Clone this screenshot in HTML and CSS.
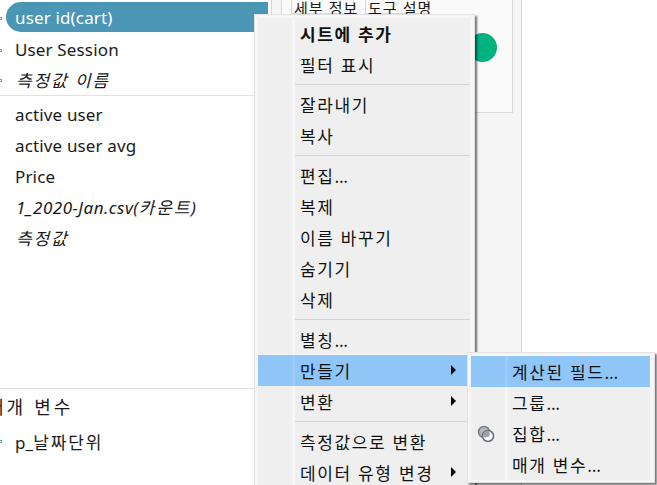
FILE: index.html
```html
<!DOCTYPE html>
<html lang="ko">
<head>
<meta charset="utf-8">
<title>필드 메뉴</title>
<link rel="stylesheet" href="styles.css">
</head>
<body>
<div class="page">
  <aside class="sidebar">
    <div class="group first">
      <div class="row selected"><span class="tick"></span><span class="latin">user id(cart)</span></div>
      <div class="row tight"><span class="tick"></span><span class="latin">User Session</span></div>
      <div class="row"><span class="tick"></span><span class="ko it">측정값 이름</span></div>
    </div>
    <div class="group second">
      <div class="row"><span class="latin">active user</span></div>
      <div class="row"><span class="latin">active user avg</span></div>
      <div class="row tight"><span class="latin">Price</span></div>
      <div class="row"><span class="latin it">1_2020-Jan.csv(<span class="ko">카운트</span>)</span></div>
      <div class="row"><span class="ko it">측정값</span></div>
    </div>
    <div class="group third">
      <div class="params ko">매개 변수</div>
      <div class="row"><span class="tick"></span><span class="latin">p_<span class="ko">날짜단위</span></span></div>
    </div>
  </aside>
  <section class="middle">
    <div class="card">
      <div class="tabs">
        <span class="tab ko">세부 정보</span>
        <span class="tab ko">도구 설명</span>
      </div>
      <div class="dot"></div>
    </div>
  </section>
  <div class="canvas"></div>
</div>

<div class="menu main-menu">
  <div class="list">
    <div class="item bold">시트에 추가</div>
    <div class="item">필터 표시</div>
    <div class="sep"></div>
    <div class="item">잘라내기</div>
    <div class="item">복사</div>
    <div class="sep"></div>
    <div class="item">편집<span class="dots">...</span></div>
    <div class="item">복제</div>
    <div class="item">이름 바꾸기</div>
    <div class="item">숨기기</div>
    <div class="item">삭제</div>
    <div class="sep"></div>
    <div class="item">별칭<span class="dots">...</span></div>
    <div class="item active">만들기<span class="arrow"></span></div>
    <div class="item">변환<span class="arrow"></span></div>
    <div class="sep"></div>
    <div class="item">측정값으로 변환</div>
    <div class="item">데이터 유형 변경<span class="arrow"></span></div>
  </div>
</div>

<div class="menu sub-menu">
  <div class="list">
    <div class="item active">계산된 필드<span class="dots">...</span></div>
    <div class="item">그룹<span class="dots">...</span></div>
    <div class="item">
      <svg class="set-icon" width="18" height="18" viewBox="0 0 18 18" aria-hidden="true">
        <circle cx="7" cy="7" r="5.5" fill="#b4b8be" stroke="#737c87" stroke-width="1.5"/>
        <circle cx="11" cy="11" r="5.5" fill="#fff" stroke="#5f6a76" stroke-width="1.5"/>
        <path d="M5.6 11.2a5.5 5.5 0 0 1 5.6-5.7 5.5 5.5 0 0 1 1.2 5.6 5.5 5.5 0 0 1-6.8.1z" fill="#9ba2aa"/>
      </svg>
      집합<span class="dots">...</span>
    </div>
    <div class="item">매개 변수<span class="dots">...</span></div>
  </div>
</div>
</body>
</html>
```

FILE: styles.css
```css
html, body {
  margin: 0;
  padding: 0;
  width: 657px;
  height: 485px;
  overflow: hidden;
  background: #fff;
}
body {
  position: relative;
  font-family: "Noto Sans", "Noto Sans CJK KR", sans-serif;
  font-size: 17px;
  color: #1a1a1a;
}
.page {
  display: flex;
  height: 485px;
}
.sidebar {
  width: 272px;
  box-sizing: border-box;
  border-right: 1px solid #d4d4d4;
  background: #fff;
  display: flex;
  flex-direction: column;
  flex: none;
}
.group.first {
  padding-top: 2px;
  height: 93px;
  border-bottom: 1px solid #e1e1e1;
}
.group.second {
  padding-top: 3px;
  height: 289px;
  border-bottom: 1px solid #e1e1e1;
}
.row {
  height: 31px;
  display: flex;
  align-items: center;
  padding-left: 15px;
  position: relative;
  white-space: nowrap;
}
.tight {
  height: 30px;
}
.tick {
  position: absolute;
  left: -2px;
  top: 15px;
  width: 4px;
  height: 3px;
  border: 1px solid #6f9fb8;
  box-sizing: border-box;
}
.selected {
  height: 30px;
  margin: 0 3px 2px 6px;
  padding-left: 9px;
  background: #4b96b4;
  color: #fff;
  border-radius: 15px 0 0 15px;
}
.selected .tick {
  left: -8px;
}
.latin {
  letter-spacing: 0.15px;
}
.ko {
  font-family: "Noto Sans CJK KR", sans-serif;
  letter-spacing: 1.8px;
}
.it {
  font-style: italic;
}
.row > .ko.it {
  padding-left: 1px;
}
.latin.it {
  letter-spacing: 0.5px;
  padding-left: 1px;
}
.params {
  margin-left: -13px;
  height: 37px;
  line-height: 34px;
  font-size: 18px;
  letter-spacing: 3px;
  white-space: nowrap;
}
.third .tick {
  top: 14px;
}
.middle {
  width: 250px;
  flex: none;
  box-sizing: border-box;
  background: #f5f5f5;
  border-right: 1px solid #d4d4d4;
  padding-left: 9px;
  padding-right: 8px;
}
.card {
  height: 113px;
  box-sizing: border-box;
  background: #fafafa;
  border: 1px solid #d8d8d8;
  border-top: 0;
  display: flex;
  flex-direction: column;
}
.tabs {
  display: flex;
  gap: 11px;
  padding-left: 9px;
  height: 14px;
}
.tab {
  width: 63px;
  box-sizing: border-box;
  border: 1px solid #d8d8d8;
  border-top: 0;
  height: 14px;
  font-size: 15px;
  line-height: 16px;
  letter-spacing: 1px;
  padding-left: 2px;
  white-space: nowrap;
}
.dot {
  width: 29px;
  height: 29px;
  border-radius: 50%;
  background: #00b280;
  margin: 19px 15px 0 auto;
}
.canvas {
  flex: 1;
  background: #fff;
}
.menu {
  position: absolute;
  box-sizing: border-box;
  background: #f6f6f6;
  border: 1px solid #e2e2e2;
  padding: 3px 4px 3px 3px;
  box-shadow: 2px 2px 2px rgba(0, 0, 0, 0.55);
  font-family: "Noto Sans CJK KR", sans-serif;
  font-size: 17px;
  letter-spacing: 1.6px;
  color: #111;
}
.main-menu {
  left: 254px;
  top: 14px;
  width: 221px;
  height: 490px;
}
.sub-menu {
  left: 467px;
  top: 352px;
  width: 188px;
  height: 131px;
}
.list {
  background: linear-gradient(to right, #efefef 34px, #f6f6f6 34px, #f6f6f6 37px, #efefef 37px);
}
.item {
  position: relative;
  height: 31px;
  line-height: 31px;
  padding-left: 42px;
  white-space: nowrap;
}
.sub-menu .item {
  padding-left: 41px;
}
.dots {
  letter-spacing: -0.3px;
}
.bold {
  font-weight: 700;
}
.active {
  background: linear-gradient(to right, #90c6f7 34px, #9ccbf7 34px, #9ccbf7 37px, #90c6f7 37px);
}
.sep {
  height: 9px;
  box-sizing: border-box;
  margin-left: 37px;
  padding-top: 4px;
}
.sep::after {
  content: "";
  display: block;
  height: 1px;
  background: #d6d6d6;
}
.arrow {
  position: absolute;
  right: 14px;
  top: 10px;
  width: 0;
  height: 0;
  border-left: 5px solid #000;
  border-top: 5px solid transparent;
  border-bottom: 5px solid transparent;
}
.set-icon {
  position: absolute;
  left: 6px;
  top: 7px;
}
```
